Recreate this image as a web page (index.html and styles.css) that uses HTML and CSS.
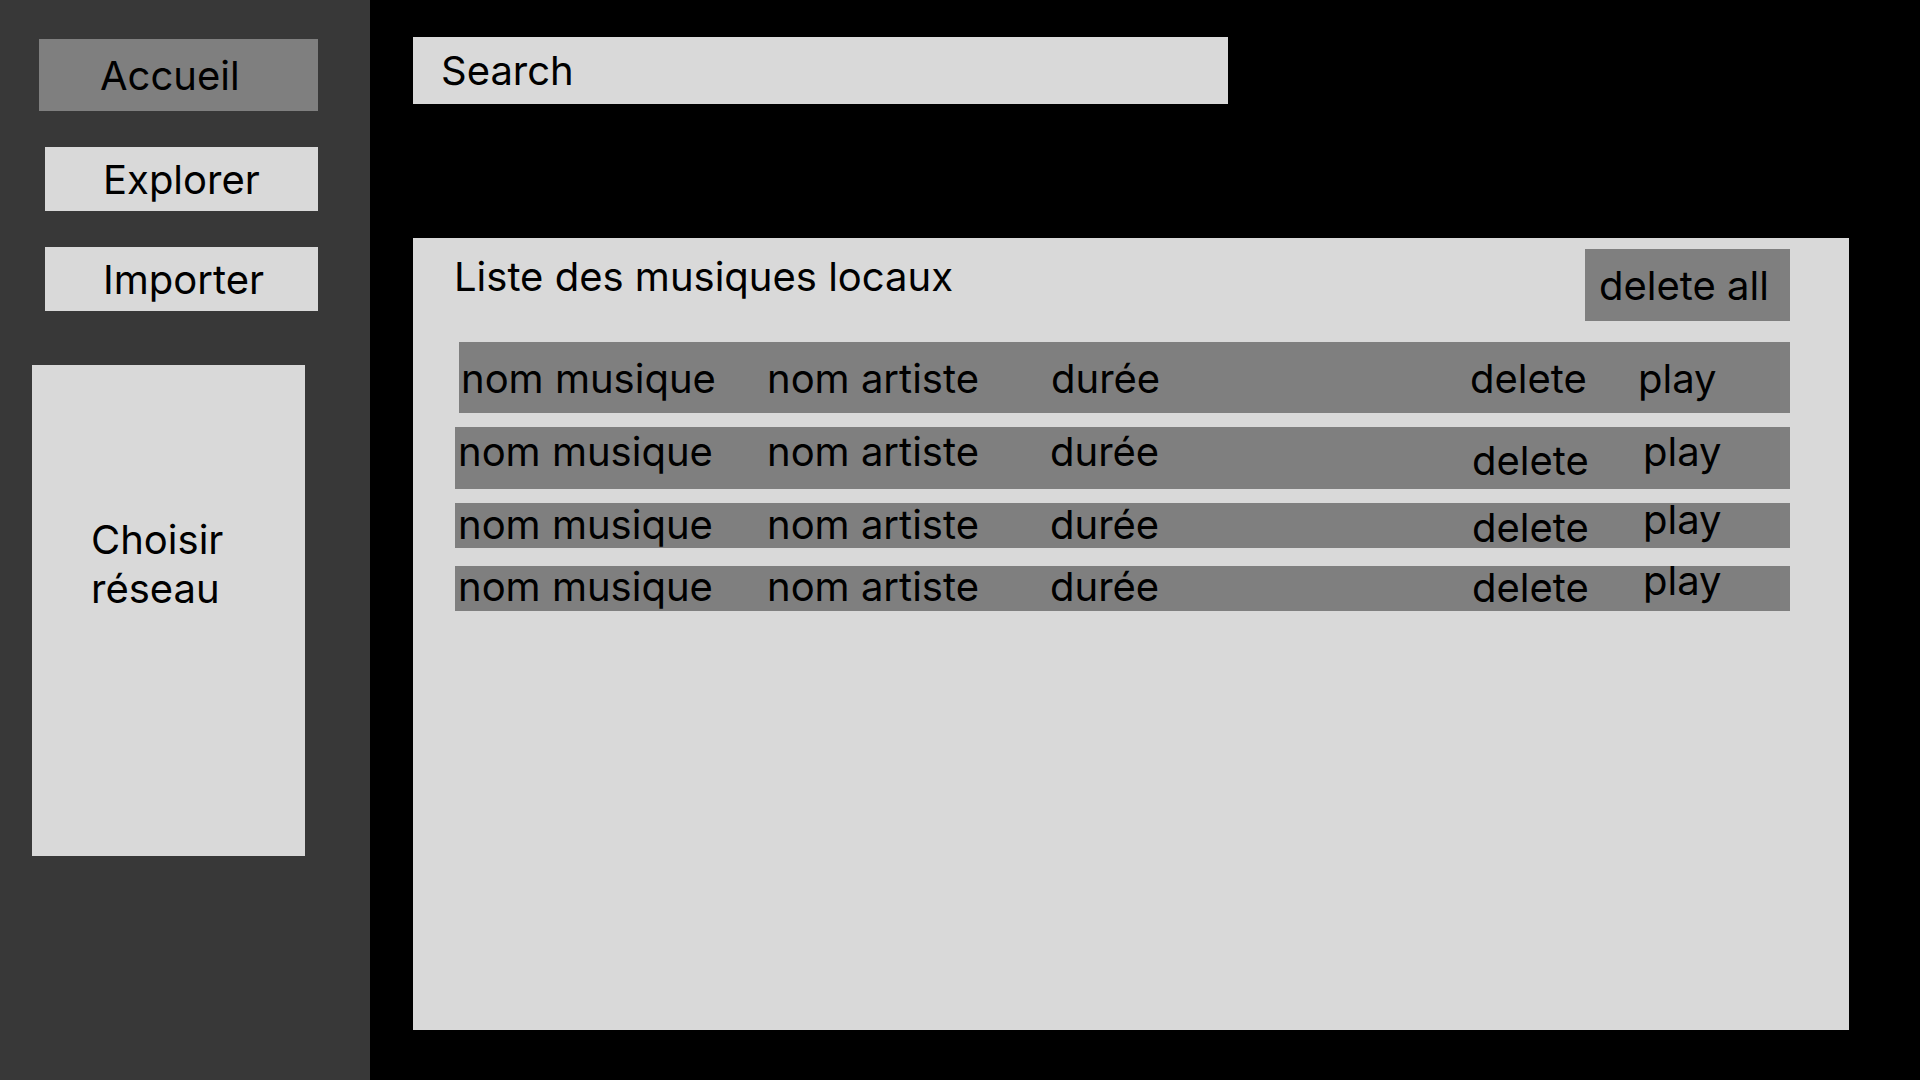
FILE: index.html
```html
<!DOCTYPE html>
<html lang="fr">
<head>
<meta charset="utf-8">
<title>Musiques locaux</title>
<link rel="stylesheet" href="styles.css">
</head>
<body>
<div class="app">
  <aside class="sidebar">
    <div class="nav-btn nav-active">Accueil</div>
    <div class="nav-btn nav-explore">Explorer</div>
    <div class="nav-btn nav-import">Importer</div>
    <div class="network">Choisir<br>réseau</div>
  </aside>
  <main class="main">
    <div class="search">Search</div>
    <section class="panel">
      <div class="panel-head">
        <div class="panel-title">Liste des musiques locaux</div>
        <div class="delete-all">delete all</div>
      </div>
      <div class="rows">
        <div class="row row-1">
          <span class="cell">nom musique</span>
          <span class="cell">nom artiste</span>
          <span class="cell">durée</span>
          <span class="cell">delete</span>
          <span class="cell">play</span>
        </div>
        <div class="row row-2">
          <span class="cell">nom musique</span>
          <span class="cell">nom artiste</span>
          <span class="cell">durée</span>
          <span class="cell c-del">delete</span>
          <span class="cell c-play">play</span>
        </div>
        <div class="row row-3">
          <span class="cell">nom musique</span>
          <span class="cell">nom artiste</span>
          <span class="cell">durée</span>
          <span class="cell c-del">delete</span>
          <span class="cell c-play">play</span>
        </div>
        <div class="row row-4">
          <span class="cell">nom musique</span>
          <span class="cell">nom artiste</span>
          <span class="cell">durée</span>
          <span class="cell c-del">delete</span>
          <span class="cell c-play">play</span>
        </div>
      </div>
    </section>
  </main>
</div>
</body>
</html>
```

FILE: styles.css
```css
* { box-sizing: border-box; }

html, body {
  margin: 0;
  padding: 0;
  background: #000;
}

body {
  font-family: "Inter", "Noto Sans", sans-serif;
  font-size: 40px;
  line-height: normal;
  color: #000;
}

.app {
  display: flex;
  width: 1920px;
  height: 1080px;
  overflow: hidden;
}

/* ---------- sidebar ---------- */
.sidebar {
  width: 370px;
  flex: none;
  background: #383838;
  display: flex;
  flex-direction: column;
  align-items: flex-start;
}

.nav-btn {
  display: flex;
  align-items: center;
  background: #d9d9d9;
  white-space: nowrap;
}

.nav-active {
  margin: 39px 0 0 39px;
  width: 279px;
  height: 72px;
  padding-left: 61px;
  background: #7f7f7f;
}

.nav-explore {
  margin: 36px 0 0 45px;
  width: 273px;
  height: 64px;
  padding-left: 58px;
}

.nav-import {
  margin: 36px 0 0 45px;
  width: 273px;
  height: 64px;
  padding-left: 58px;
}

.network {
  margin: 54px 0 0 32px;
  width: 273px;
  height: 491px;
  padding: 150px 0 0 59px;
  background: #d9d9d9;
}

/* ---------- main ---------- */
.main {
  flex: 1;
  padding-left: 43px;
  display: flex;
  flex-direction: column;
  align-items: flex-start;
}

.search {
  margin-top: 37px;
  width: 815px;
  height: 67px;
  padding-left: 28px;
  display: flex;
  align-items: center;
  background: #d9d9d9;
}

.panel {
  margin-top: 134px;
  width: 1436px;
  height: 792px;
  background: #d9d9d9;
  display: flex;
  flex-direction: column;
}

.panel-head {
  display: flex;
  justify-content: space-between;
  align-items: flex-start;
  padding-right: 59px;
}

.panel-title {
  margin: 14px 0 0 41px;
  white-space: nowrap;
}

.delete-all {
  margin-top: 11px;
  width: 205px;
  height: 72px;
  padding-left: 14px;
  display: flex;
  align-items: center;
  background: #7f7f7f;
  white-space: nowrap;
}

.rows {
  margin: 21px 59px 0 42px;
  display: flex;
  flex-direction: column;
}

.row {
  display: grid;
  grid-template-columns: 309px 283px 422px 171px 1fr;
  align-items: start;
  background: #7f7f7f;
  padding-left: 3px;
  white-space: nowrap;
}

.row-1 {
  margin-left: 4px;
  padding-left: 2px;
  height: 71px;
  grid-template-columns: 306px 284px 419px 168px 1fr;
}
.row-1 .cell { margin-top: 12px; }

.row-2 { margin-top: 14px; height: 62px; }
.row-2 .c-del { margin-top: 9px; }

.row-3 { margin-top: 14px; height: 45px; }
.row-3 .cell { margin-top: -3px; }
.row-3 .c-del { margin-top: 0; }
.row-3 .c-play { margin-top: -8px; }

.row-4 { margin-top: 18px; height: 45px; }
.row-4 .cell { margin-top: -4px; }
.row-4 .c-del { margin-top: -3px; }
.row-4 .c-play { margin-top: -10px; }
```
